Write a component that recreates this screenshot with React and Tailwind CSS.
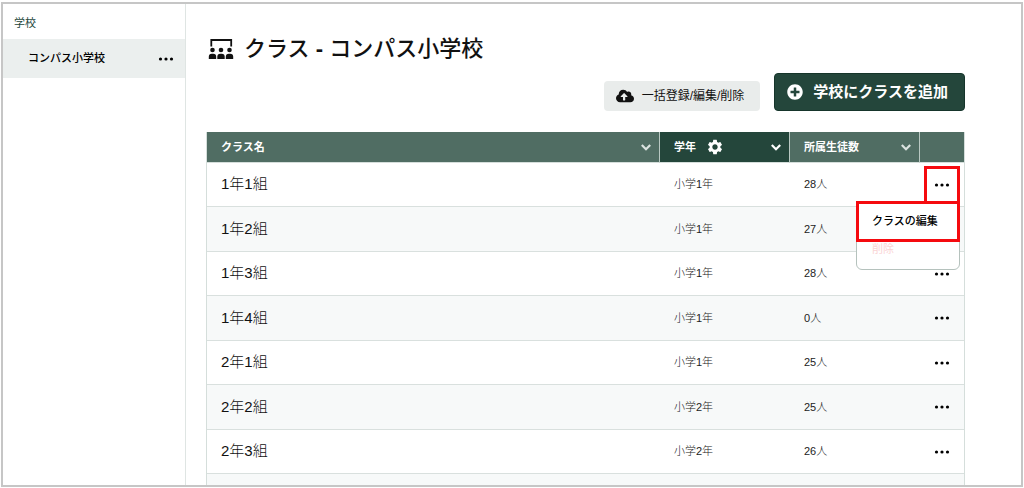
import React, { useState } from 'react';
import { FaCloudUploadAlt, FaPlusCircle } from 'react-icons/fa';
import { MdSettings } from 'react-icons/md';
import clsx from 'clsx';

const classes = [
  { name: '1年1組', grade: '小学1年', students: 28 },
  { name: '1年2組', grade: '小学1年', students: 27 },
  { name: '1年3組', grade: '小学1年', students: 28 },
  { name: '1年4組', grade: '小学1年', students: 0 },
  { name: '2年1組', grade: '小学1年', students: 25 },
  { name: '2年2組', grade: '小学2年', students: 25 },
  { name: '2年3組', grade: '小学2年', students: 26 },
];

function Dots() {
  return (
    <svg viewBox="0 0 16 4" className="w-4 h-1" fill="currentColor" aria-hidden="true">
      <circle cx="2.5" cy="2" r="1.6" />
      <circle cx="8" cy="2" r="1.6" />
      <circle cx="13.5" cy="2" r="1.6" />
    </svg>
  );
}

function Chevron() {
  return (
    <svg viewBox="0 0 12 12" className="w-3 h-3" fill="none" stroke="currentColor" strokeWidth="2.2" aria-hidden="true">
      <path d="M1.8 4l4.2 4.2L10.2 4" />
    </svg>
  );
}

function ClassroomIcon() {
  return (
    <svg viewBox="0 0 26 22" className="w-[26px] h-[22px]" fill="currentColor" aria-hidden="true">
      <path d="M3.3 8.4V2h19.9v6.4" fill="none" stroke="currentColor" strokeWidth="1.8" />
      {[4.5, 13, 21.5].map((x) => (
        <g key={x}>
          <circle cx={x} cy="12" r="2.3" />
          <path d={`M${x - 3.7} 21v-2.2a3 3 0 0 1 3-3h1.4a3 3 0 0 1 3 3V21z`} />
        </g>
      ))}
    </svg>
  );
}

function HeaderCell({ label, active, children }) {
  return (
    <th
      scope="col"
      className={clsx(
        'p-0 text-left font-bold border-r border-b border-r-[#b9c8c2] border-b-[#d5dedb]',
        active ? 'bg-[#24463b]' : 'bg-[#506d63]'
      )}
    >
      <div className="flex items-center pl-3.5 pr-[7px]">
        <span>{label}</span>
        {children}
        <button aria-label={`${label}で並べ替え`} className={clsx('ml-auto', active ? 'text-white' : 'text-[#dbe3e0]')}>
          <Chevron />
        </button>
      </div>
    </th>
  );
}

function RowMenu() {
  return (
    <div className="absolute right-0 -mr-[3px] top-8 z-10 w-[104px] bg-white text-left text-[11px] rounded-md border border-[#b5c2bd]">
      <button className="block -m-px w-[104px] h-[41px] pl-[13px] text-left font-medium border-3 border-[#f50a0f] text-black">
        クラスの編集
      </button>
      <button className="block h-7 pl-[15px] pb-2.5 text-[#fad4d4]">削除</button>
    </div>
  );
}

export default function App() {
  const [openRow, setOpenRow] = useState(0);

  return (
    <div className="h-screen pt-0.5 px-px pb-px bg-white text-[#111] font-['Liberation_Sans','Noto_Sans_CJK_JP',sans-serif]">
      <div className="flex h-full border-2 border-[#c6c6c6] overflow-hidden">
        <aside className="w-[183px] shrink-0 border-r border-[#dfe5e3] text-[11px]">
          <h2 className="h-[35px] flex items-center pt-1 pl-[11px] text-[#24463b]">学校</h2>
          <div className="flex items-center justify-between h-[39px] pl-[25px] pr-[11px] bg-[#ebefee] text-black">
            <a href="#school" className="font-medium">コンパス小学校</a>
            <button aria-label="学校メニュー"><Dots /></button>
          </div>
        </aside>

        <main className="flex-1 min-w-0 pl-5 pr-14 pt-[29px]">
          <h1 className="flex items-center gap-2.5 h-8 text-[22px] leading-8 font-medium pl-0.5">
            <ClassroomIcon />
            <span>クラス <b>-</b> コンパス小学校</span>
          </h1>

          <div className="flex justify-end items-end gap-3.5 mt-2">
            <button className="flex items-center gap-2 h-[30px] pl-3 pr-4 rounded bg-[#e9eceb] text-xs">
              <FaCloudUploadAlt className="w-[18px] h-[18px]" />
              一括登録/編集/削除
            </button>
            <button className="flex items-center gap-2.5 h-[38px] pl-3 pr-4 rounded border border-[#16352b] bg-[#24463b] text-white text-[15px] font-bold">
              <FaPlusCircle className="w-4 h-4" />
              学校にクラスを追加
            </button>
          </div>

          <table className="w-full mt-[21px] table-fixed border-separate border-spacing-0 border-l border-r border-[#d5dedb] text-[11px]">
            <colgroup>
              <col />
              <col className="w-[130px]" />
              <col className="w-[130px]" />
              <col className="w-11" />
            </colgroup>
            <thead>
              <tr className="h-[31px] text-white">
                <HeaderCell label="クラス名" />
                <HeaderCell label="学年" active>
                  <MdSettings className="w-[18px] h-[18px] ml-2.5" />
                </HeaderCell>
                <HeaderCell label="所属生徒数" />
                <th className="p-0 bg-[#506d63] border-b border-[#d5dedb]" aria-label="操作" />
              </tr>
            </thead>
            <tbody>
              {classes.map((item, i) => (
                <tr key={item.name} className="h-11 even:h-[45px] even:bg-[#f7f9f9] [&>td]:border-b [&>td]:border-[#d9e0de]">
                  <td className="py-0 pl-3.5 text-[15px] font-light">{item.name}</td>
                  <td className="py-0 pl-3.5 font-light text-[#222]">{item.grade}</td>
                  <td className="py-0 pl-3.5 font-light text-[#222]">{item.students}人</td>
                  <td className="p-0">
                    <div
                      className={clsx(
                        'relative flex items-center justify-center mx-auto w-9',
                        openRow === i && 'h-[38px] border-3 border-[#f50a0f]'
                      )}
                    >
                      <button
                        aria-label={`${item.name}のメニュー`}
                        className="text-black"
                        onClick={() => setOpenRow(openRow === i ? null : i)}
                      >
                        <Dots />
                      </button>
                      {openRow === i && <RowMenu />}
                    </div>
                  </td>
                </tr>
              ))}
              <tr className="h-11 bg-[#f7f9f9]">
                <td colSpan={4} />
              </tr>
            </tbody>
          </table>
        </main>
      </div>
    </div>
  );
}
